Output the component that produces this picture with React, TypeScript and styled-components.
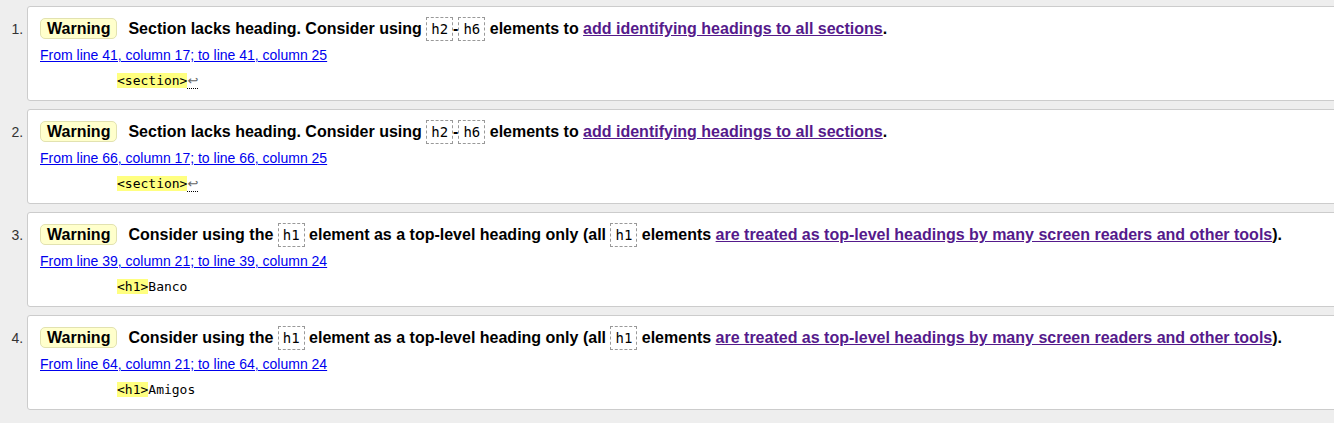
import React from "react";
import styled, { createGlobalStyle } from "styled-components";

const Global = createGlobalStyle`
  html, body { margin: 0; padding: 0; background: #eeeeee; overflow: hidden; }
  body { font-family: "Liberation Sans", Arial, sans-serif; color: #000; }
`;

const List = styled.ol`
  margin: 0;
  padding: 6px 0 0 27px;
  width: 1320px;
  list-style: decimal outside;
`;

const Item = styled.li`
  background: #fff;
  border: 1px solid #cccccc;
  border-radius: 3px;
  padding: 10px 12px 11px 12px;
  margin: 0 0 8px 0;
  font-size: 14px;
  &::marker {
    font-family: "Liberation Sans", Arial, sans-serif;
    font-size: 14px;
    color: #333;
  }
`;

const Message = styled.p`
  margin: 0;
  font-size: 16px;
  font-weight: bold;
  line-height: 24px;
  white-space: nowrap;
`;

const Badge = styled.strong`
  display: inline-block;
  background: #ffffcc;
  border: 1px solid #e2e2b0;
  border-radius: 5px;
  padding: 0 6px;
  line-height: 19px;
  margin-right: 11px;
`;

const Code = styled.code`
  font-family: "DejaVu Sans Mono", "Liberation Mono", monospace;
  font-weight: normal;
  font-size: 14px;
  padding: 3px 4px;
  border: 1px dashed #999;
`;

const Link = styled.a<{ $visited?: boolean }>`
  color: ${(p) => (p.$visited ? "#551a8b" : "#0000ee")};
  text-decoration: underline;
`;

const Location = styled.p`
  margin: 5px 0 0 0;
  font-size: 14px;
  line-height: 18px;
`;

const Extract = styled.p`
  margin: 8px 0 0 77px;
  font-family: "DejaVu Sans Mono", "Liberation Mono", monospace;
  font-size: 13px;
  line-height: 17px;
  white-space: pre;
`;

const Mark = styled.mark`
  background: #ffff80;
  color: #000;
`;

const LineBreak = styled.b`
  font-family: "DejaVu Sans", sans-serif;
  font-weight: normal;
  font-size: 13px;
  color: #666;
  border-bottom: 1px dotted #000;
`;

type Entry = {
  kind: "section" | "h1";
  loc: string;
  tag: string;
  after: string;
  lb?: boolean;
};

const entries: Entry[] = [
  { kind: "section", loc: "From line 41, column 17; to line 41, column 25", tag: "<section>", after: "", lb: true },
  { kind: "section", loc: "From line 66, column 17; to line 66, column 25", tag: "<section>", after: "", lb: true },
  { kind: "h1", loc: "From line 39, column 21; to line 39, column 24", tag: "<h1>", after: "Banco" },
  { kind: "h1", loc: "From line 64, column 21; to line 64, column 24", tag: "<h1>", after: "Amigos" },
];

function MessageText({ kind }: { kind: Entry["kind"] }) {
  if (kind === "section") {
    return (
      <Message>
        <Badge>Warning</Badge>
        Section lacks heading. Consider using <Code>h2</Code>-<Code>h6</Code> elements to{" "}
        <Link $visited href="#">add identifying headings to all sections</Link>.
      </Message>
    );
  }
  return (
    <Message>
      <Badge>Warning</Badge>
      Consider using the <Code>h1</Code> element as a top-level heading only (all <Code>h1</Code> elements{" "}
      <Link $visited href="#">are treated as top-level headings by many screen readers and other tools</Link>).
    </Message>
  );
}

export default function App() {
  return (
    <>
      <Global />
      <List>
        {entries.map((e, i) => (
          <Item key={i}>
            <MessageText kind={e.kind} />
            <Location>
              <Link href="#">{e.loc}</Link>
            </Location>
            <Extract>
              <code>
                <Mark>{e.tag}</Mark>
                {e.after}
                {e.lb && <LineBreak title="line break">↩</LineBreak>}
              </code>
            </Extract>
          </Item>
        ))}
      </List>
    </>
  );
}
